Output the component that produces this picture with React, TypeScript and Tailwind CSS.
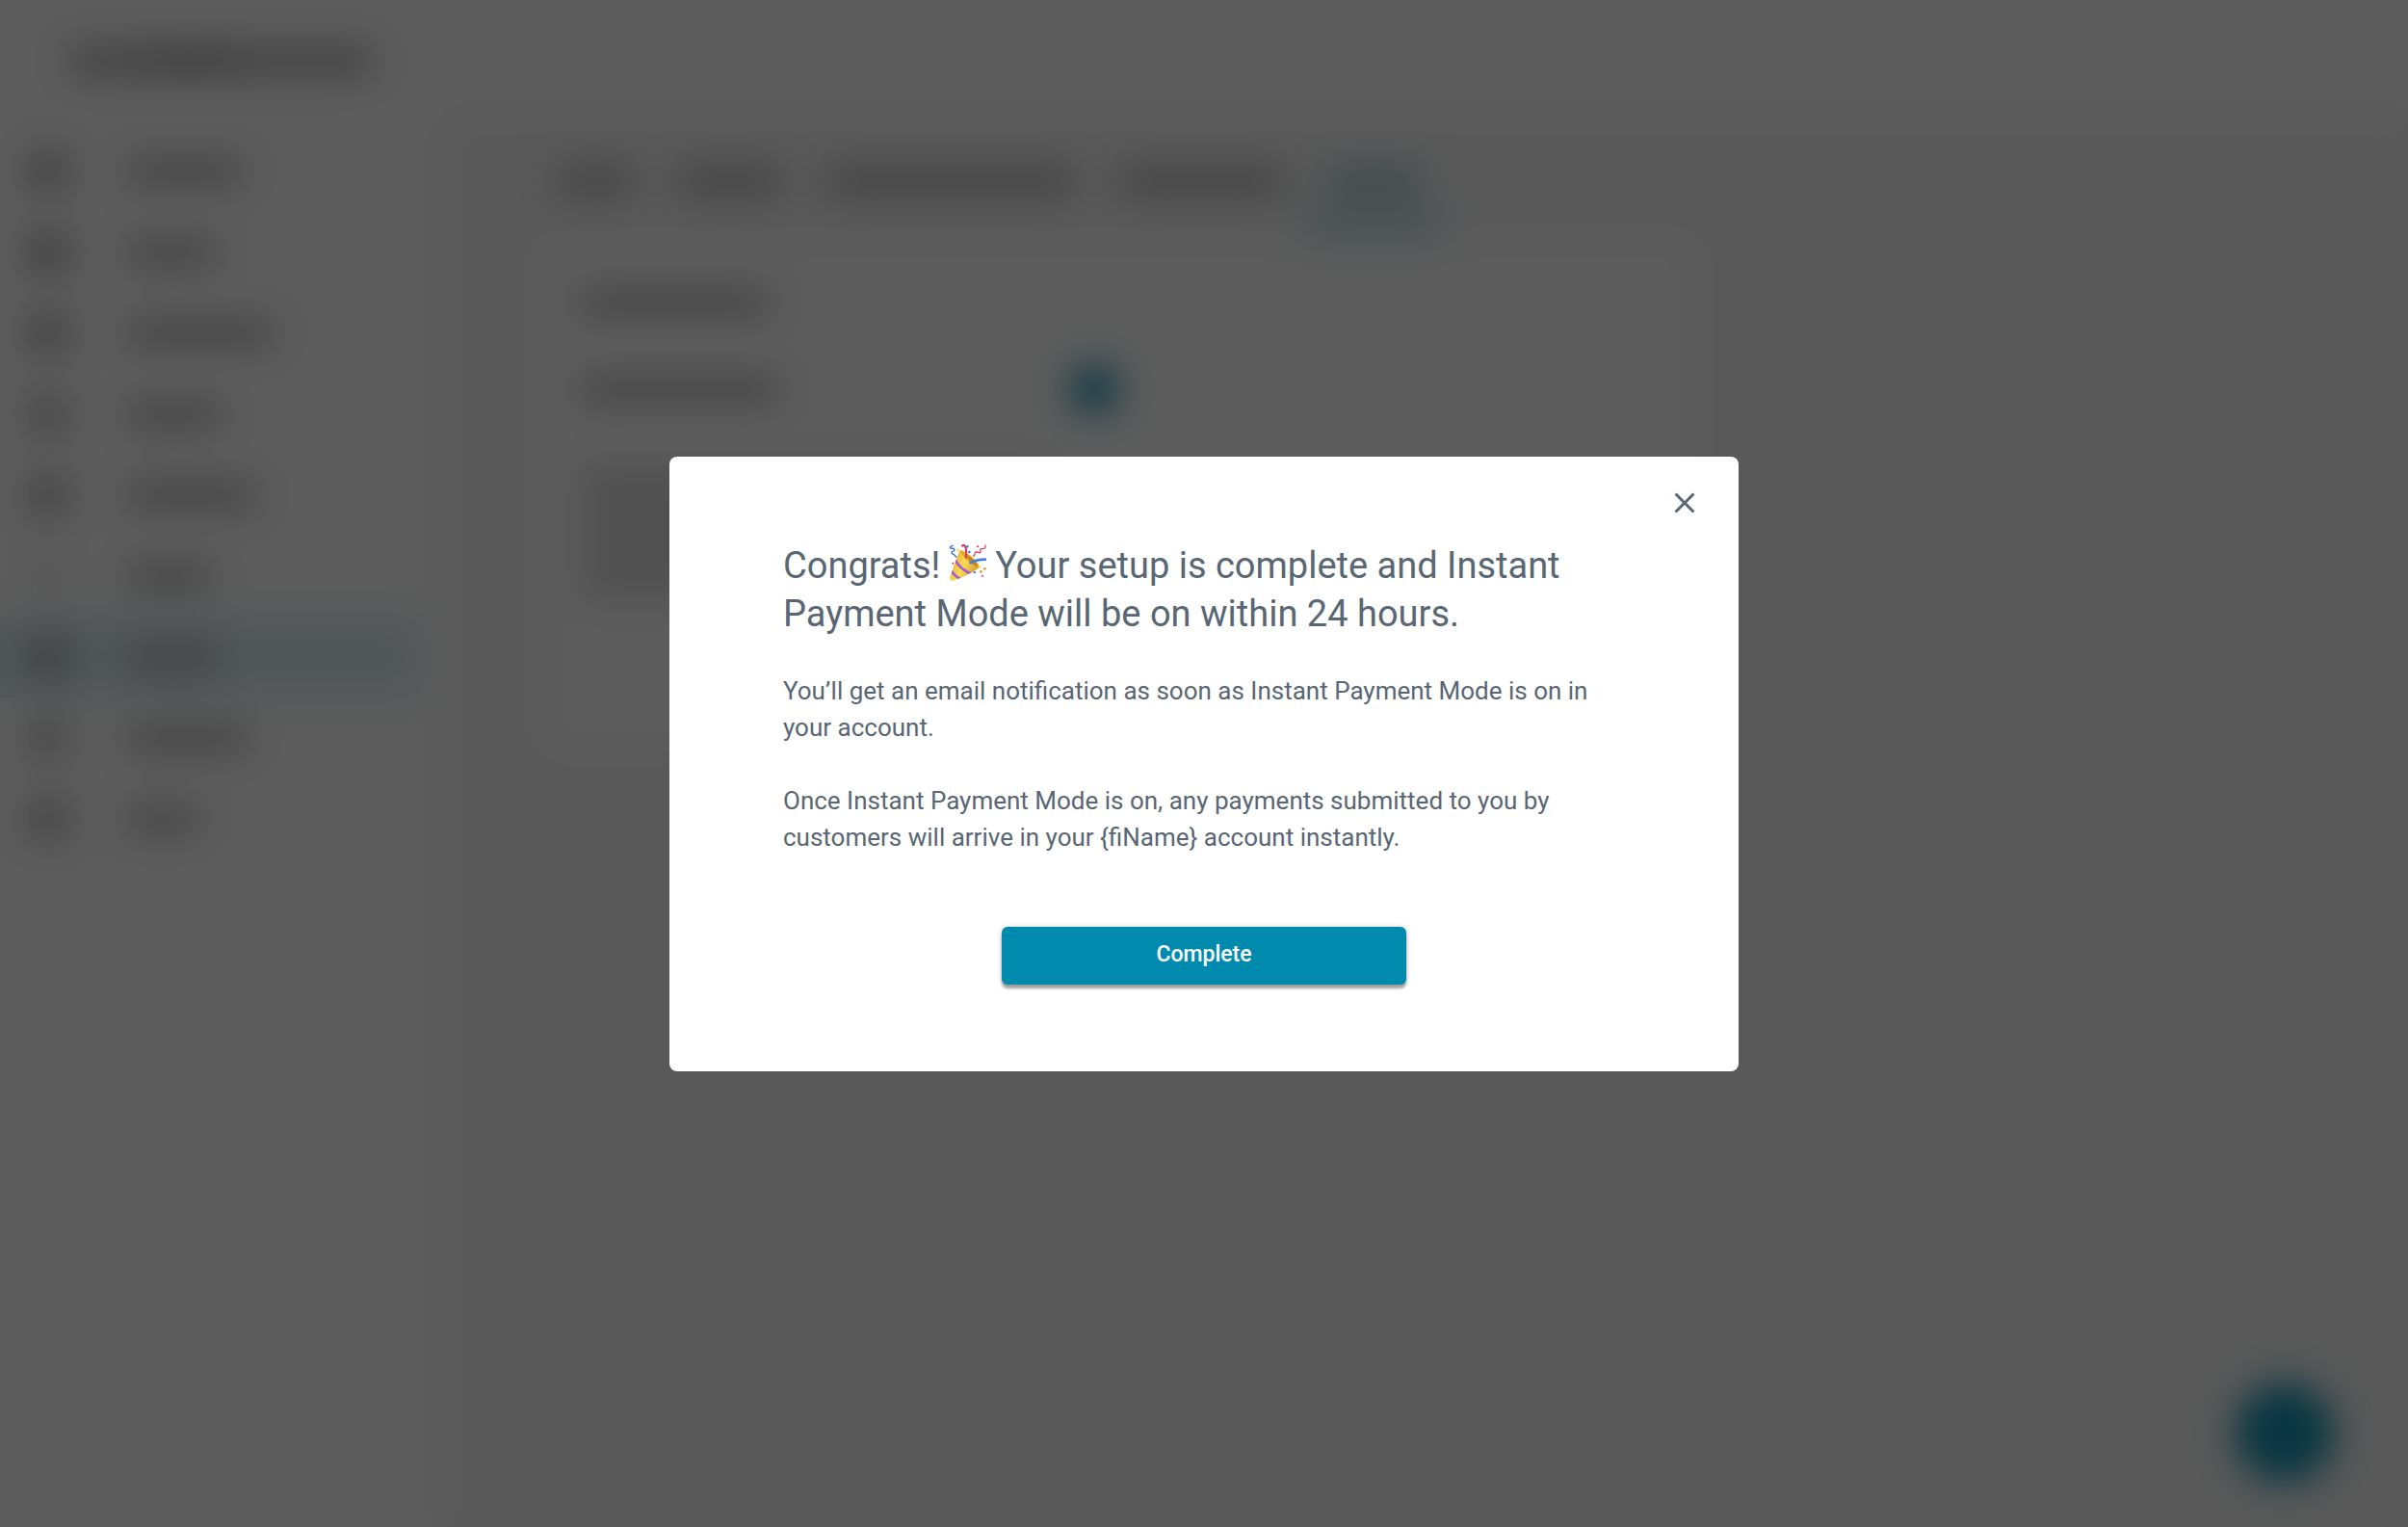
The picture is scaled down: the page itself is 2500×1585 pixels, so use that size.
import React, { useState } from 'react';
import { MdAdd, MdClose } from 'react-icons/md';

const NAV_ITEMS = [
  { width: 'w-[120px]', icon: 'bg-[#8c8c8c]', active: false },
  { width: 'w-[92px]', icon: 'bg-[#808080]', active: false },
  { width: 'w-[152px]', icon: 'bg-[#8c8c8c]', active: false },
  { width: 'w-[98px]', icon: 'bg-[#a0a0a0]', active: false },
  { width: 'w-[134px]', icon: 'bg-[#949494]', active: false },
  { width: 'w-[88px]', icon: 'bg-[#e4e4e4]', active: false },
  { width: 'w-[94px]', icon: 'bg-[#808686]', active: true },
  { width: 'w-[126px]', icon: 'bg-[#a6a6a6]', active: false },
  { width: 'w-[74px]', icon: 'bg-[#949494]', active: false },
];

const TAB_WIDTHS = ['w-[76px]', 'w-[106px]', 'w-[256px]', 'w-[172px]'];

const Line: React.FC<{ className: string }> = ({ className }) => (
  <div className={`h-5 rounded bg-[#a0a0a0] ${className}`} />
);

// Placeholder version of the settings page that sits behind the dialog
const PageBackdrop: React.FC = () => (
  <div className="flex min-h-screen flex-col bg-[#f5f5f5]" aria-hidden="true">
    <header className="flex h-[126px] shrink-0 items-center bg-white px-[72px]">
      <div className="flex h-6 w-[314px] items-center rounded bg-[#a0a0a0] px-20">
        <div className="h-6 w-[90px] bg-[#8c8c8c]" />
      </div>
    </header>
    <div className="flex flex-1">
      <nav className="w-[464px] shrink-0 bg-white pt-[10px]">
        {NAV_ITEMS.map((item, index) => (
          <div
            key={index}
            className={`mr-7 flex h-[84px] items-center gap-[62px] rounded-r-lg pl-[30px] ${item.active ? 'bg-[#dfeff3]' : ''}`}
          >
            <div className={`size-10 rounded-lg opacity-70 ${item.icon}`} />
            <Line className={item.width} />
          </div>
        ))}
      </nav>
      <main className="flex-1 pl-[96px] pt-3">
        <div className="mb-2 flex h-[100px] gap-12 pl-5">
          {TAB_WIDTHS.map((width) => (
            <div key={width} className="flex items-center">
              <Line className={width} />
            </div>
          ))}
          <div className="-ml-7 flex w-[144px] items-center justify-center border-b-8 border-[#3fa9c0] pt-3">
            <div className="h-6 w-[96px] rounded bg-[#92c3ce]" />
          </div>
        </div>
        <section className="flex h-[536px] w-[1204px] flex-col rounded-lg bg-white px-[42px] pt-[58px]">
          <Line className="w-[196px]" />
          <div className="mt-[50px] flex h-[60px] items-center">
            <Line className="w-[206px]" />
            <div className="ml-[296px] flex h-6 w-14 items-center justify-end rounded-full bg-[#a6d5e0]">
              <div className="size-[46px] shrink-0 rounded-full bg-[#008bae]" />
            </div>
          </div>
          <div className="mt-14 flex flex-col gap-5 opacity-70">
            <div className="h-4 w-[480px] bg-[#a0a0a0]" />
            <div className="h-4 w-[480px] bg-[#a0a0a0]" />
            <div className="h-4 w-[480px] bg-[#a0a0a0]" />
            <div className="h-4 w-[300px] bg-[#a0a0a0]" />
          </div>
        </section>
      </main>
    </div>
  </div>
);

const PartyPopper: React.FC = () => (
  <svg viewBox="0 0 114 114" className="inline-block size-[38px] align-[-3px]" aria-hidden="true">
    <defs>
      <linearGradient id="cone" x1="0" y1="0.3" x2="1" y2="0.8">
        <stop offset="0" stopColor="#e9a92a" />
        <stop offset="0.45" stopColor="#fbdc55" />
        <stop offset="1" stopColor="#c9861c" />
      </linearGradient>
      <clipPath id="coneClip">
        <path d="M31 19 L92 73 Q50 101 12 113 Q0 115 1 103 Q14 62 31 19Z" />
      </clipPath>
    </defs>
    <path d="M31 19 L92 73 Q50 101 12 113 Q0 115 1 103 Q14 62 31 19Z" fill="url(#cone)" />
    <g clipPath="url(#coneClip)" fill="none" stroke="#a45fd0" strokeWidth="8">
      <path d="M16 48 Q34 80 72 94" />
      <path d="M4 81 Q14 98 36 110" />
    </g>
    <path d="M31 19 Q42 17 66 36 Q92 58 92 73 Q84 79 60 56 Q36 33 31 19Z" fill="#e3ab30" />
    <path d="M52 32 Q66 39 78 53 Q88 66 86 70 Q76 66 65 54 Q54 43 52 32Z" fill="#c07d1a" />
    <g fill="none" strokeLinecap="round">
      <path d="M50 41 Q54 12 47 5 Q43 1 39 5" stroke="#e72c58" strokeWidth="6" />
      <path d="M65 57 Q82 47 111 47" stroke="#3f7fe6" strokeWidth="8" />
      <path d="M9 4 Q-2 7 4 13 Q17 10 14 20 Q4 22 7 29 Q14 31 20 39" stroke="#2f6fe0" strokeWidth="4" />
      <path d="M110 3 Q115 15 101 14 Q94 12 96 21 Q97 29 88 25 Q80 20 78 30 Q77 37 74 36" stroke="#e0436c" strokeWidth="4" />
    </g>
    <circle cx="55" cy="7" r="4" fill="#3f7fe6" />
    <circle cx="61" cy="24" r="4" fill="#3f7fe6" />
    <circle cx="87" cy="7" r="3" fill="#e72c58" />
    <circle cx="25" cy="18" r="4" fill="#f7df56" />
    <circle cx="10" cy="59" r="3" fill="#e72c58" />
    <circle cx="94" cy="69" r="4" fill="#f7df56" />
    <circle cx="97" cy="85" r="4" fill="#f08c32" />
    <circle cx="109" cy="76" r="4" fill="#f08c32" />
    <circle cx="77" cy="87" r="4" fill="#3f7fe6" />
    <circle cx="102" cy="99" r="4" fill="#ee7aa5" />
  </svg>
);

export default function App() {
  const [open, setOpen] = useState(true);
  const close = () => setOpen(false);

  return (
    <div className="relative min-h-screen font-['Roboto',sans-serif] text-[#596673]">
      <PageBackdrop />
      {/* floating action button */}
      <div
        className="fixed bottom-12 right-[78px] flex size-[100px] items-center justify-center rounded-full bg-[#008bae] text-white"
        aria-hidden="true"
      >
        <MdAdd size={48} />
      </div>

      {open && (
        <div className="fixed inset-0 flex items-center justify-center bg-black/64 backdrop-blur-[20px]">
          <div
            role="dialog"
            aria-modal="true"
            aria-labelledby="dialog-title"
            className="relative w-full max-w-[1110px] rounded-lg bg-white px-[118px] pb-[90px] pt-[88px]"
          >
            <button
              type="button"
              aria-label="Close"
              onClick={close}
              className="absolute right-[38px] top-[30px] cursor-pointer"
            >
              <MdClose size={36} />
            </button>

            <h2 id="dialog-title" className="text-[38px] leading-[50px]">
              Congrats! <PartyPopper /> Your setup is complete and Instant Payment Mode will be on within 24 hours.
            </h2>
            <p className="mt-9 text-[26px] leading-[38px]">
              You’ll get an email notification as soon as Instant Payment Mode is on in your account.
            </p>
            <p className="mt-[38px] text-[26px] leading-[38px]">
              {'Once Instant Payment Mode is on, any payments submitted to you by customers will arrive in your {fiName} account instantly.'}
            </p>

            <div className="mt-[74px] flex justify-center">
              <button
                type="button"
                onClick={close}
                className="h-[60px] w-[420px] cursor-pointer rounded-md bg-[#008bae] text-[23px] font-medium text-white shadow-[0_4px_3px_rgba(0,0,0,0.35),0_0_6px_rgba(0,0,0,0.15)]"
              >
                Complete
              </button>
            </div>
          </div>
        </div>
      )}
    </div>
  );
}
